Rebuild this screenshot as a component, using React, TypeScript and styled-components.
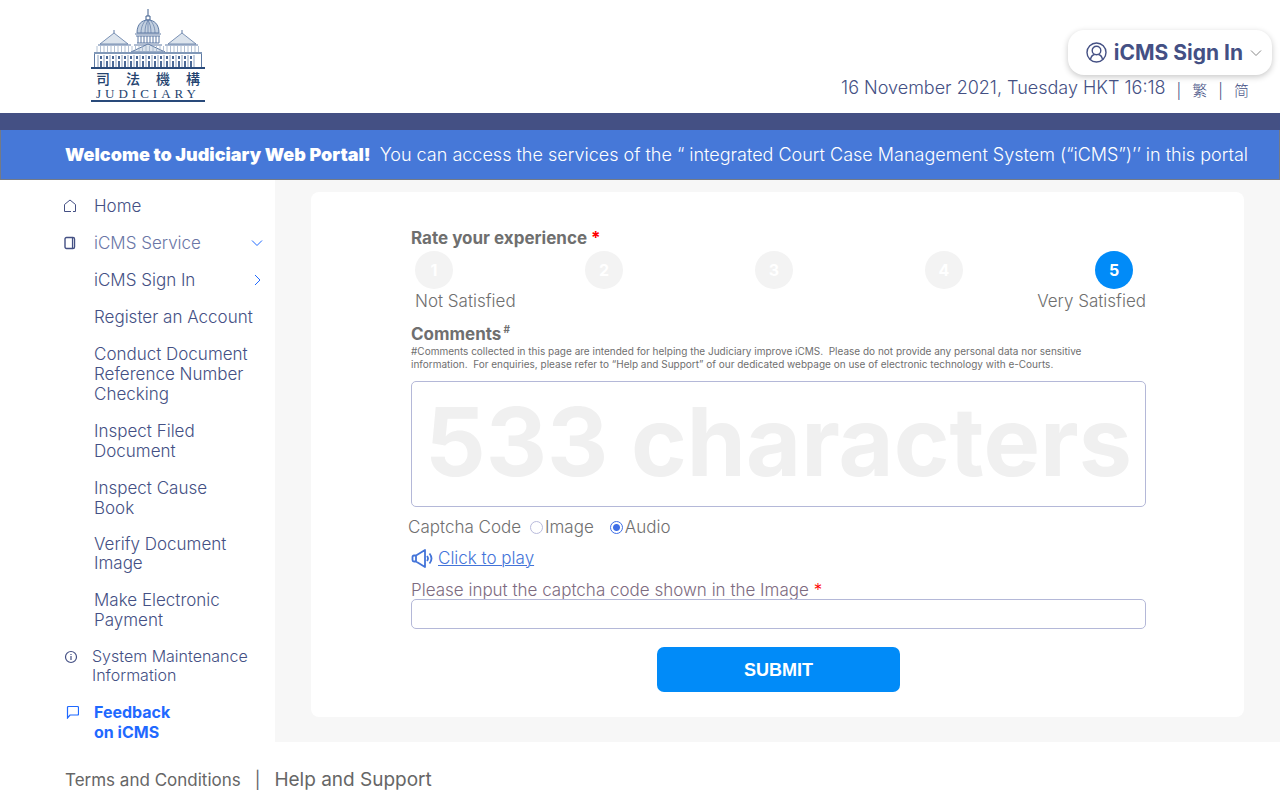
import React from "react";
import styled, { createGlobalStyle } from "styled-components";

const ink = "#445084";
const link = "#4374d9";
const grey = "#6f6f6f";
const bright = "#018bf8";

const GlobalStyle = createGlobalStyle`
  * { box-sizing: border-box; }
  body {
    margin: 0;
    background: #fff;
    color: ${ink};
    font-family: Inter, "Open Sans", "Noto Sans CJK TC", sans-serif;
    font-size: 17px;
    line-height: 20px;
  }
  a { color: inherit; text-decoration: none; }
`;

const Header = styled.header`
  display: flex;
  justify-content: space-between;
  min-height: 113px;
  padding: 8px 8px 8px 90px;
`;

const HeaderSide = styled.div`
  display: flex;
  flex-direction: column;
  align-items: flex-end;
  padding-top: 22px;
`;

const SignInButton = styled.button`
  display: flex;
  align-items: center;
  gap: 7px;
  height: 45px;
  padding: 0 10px 0 18px;
  border: 0;
  border-radius: 16px;
  background: #fff;
  box-shadow: 0 2px 6px rgba(0, 0, 0, 0.22);
  color: ${ink};
  font: 700 21px/24px Inter, sans-serif;
`;

const StatusLine = styled.div`
  display: flex;
  align-items: flex-start;
  gap: 11px;
  padding: 3px 23px 0 0;
`;

const Clock = styled.time`
  font-size: 18px;
  font-weight: 300;
`;

const Languages = styled.nav`
  display: flex;
  gap: 11px;
  padding-top: 3px;
  font-size: 15px;
  font-weight: 300;
`;

const Stripe = styled.div`
  height: 17px;
  background: ${ink};
`;

const Banner = styled.div`
  display: flex;
  align-items: center;
  gap: 9px;
  min-height: 50px;
  padding: 0 23px 0 64px;
  border: solid #747a86;
  border-width: 0 1px 1px;
  background: #4678d8;
  color: #fff;
  font-size: 18px;
  font-weight: 300;
  white-space: nowrap;

  strong { font-weight: 900; }
`;

const Body = styled.div`
  display: grid;
  grid-template-columns: 275px minmax(0, 1fr);
`;

const Sidebar = styled.nav`
  padding: 16px 10px 0 64px;
`;

const NavList = styled.ul`
  display: flex;
  flex-direction: column;
  gap: 17px;
  margin: 0;
  padding: 0;
  list-style: none;
`;

const NavLink = styled.a<{ $active?: boolean; $small?: boolean; $tight?: boolean; $muted?: boolean }>`
  display: grid;
  grid-template-columns: 14px 1fr 14px;
  column-gap: ${(p) => (p.$small ? 14 : 16)}px;
  font-size: ${(p) => (p.$small || p.$active ? 16 : 17)}px;
  line-height: ${(p) => (p.$small || p.$tight ? 19 : 20)}px;
  font-weight: ${(p) => (p.$active ? 700 : 300)};
  color: ${(p) => (p.$active ? "#1f69ff" : p.$muted ? "#6a76a6" : ink)};
  white-space: nowrap;

  svg { margin-top: 3px; }
`;

const Content = styled.main`
  padding: 12px 36px 25px;
  background: #f7f7f7;
`;

const Card = styled.form`
  display: flex;
  flex-direction: column;
  padding: 36px 98px 25px 100px;
  border-radius: 8px;
  background: #fff;
  color: ${grey};
  font-weight: 300;
`;

const Rating = styled.fieldset`
  margin: 0 0 13px;
  padding: 0;
  border: 0;
`;

const Legend = styled.legend`
  padding: 0;
  margin-bottom: 3px;
  font-weight: 700;
`;

const Required = styled.span`
  color: #f00;
`;

const Scale = styled.div`
  display: flex;
  justify-content: space-between;
  padding: 0 13px 0 4px;
`;

const Score = styled.label`
  position: relative;
  display: grid;
  place-items: center;
  width: 38px;
  height: 38px;
  border-radius: 50%;
  background: #f3f3f3;
  color: #fff;
  font-size: 16px;
  font-weight: 700;

  input {
    position: absolute;
    inset: 0;
    margin: 0;
    opacity: 0;
  }

  &:has(input:checked) { background: ${bright}; }
`;

const ScaleEnds = styled.div`
  display: flex;
  justify-content: space-between;
  padding: 2px 0 0 4px;
`;

const FieldTitle = styled.label`
  font-weight: 700;

  sup {
    margin-left: 2px;
    font-size: 10px;
    line-height: 10px;
  }
`;

const Note = styled.p`
  margin: 1px 0 10px;
  font-size: 10px;
  line-height: 13px;
  font-weight: 400;
  white-space: pre-line;
`;

const CommentBox = styled.div`
  position: relative;
  height: 126px;
`;

const CommentInput = styled.textarea`
  display: block;
  width: 100%;
  height: 100%;
  padding: 8px;
  border: 1px solid #b4b8d8;
  border-radius: 5px;
  background: transparent;
  resize: none;
`;

const Remaining = styled.output`
  position: absolute;
  inset: 0 0 4px;
  display: grid;
  place-items: center;
  color: #f0f0f0;
  font-size: 95px;
  font-weight: 700;
  line-height: 120px;
  white-space: nowrap;
  pointer-events: none;
`;

const CaptchaMode = styled.div`
  display: flex;
  align-items: center;
  gap: 9px;
  margin: 10px 0 11px -3px;
`;

const Choice = styled.label`
  display: flex;
  align-items: center;
  gap: 2px;
  margin-right: 7px;
`;

const Radio = styled.input`
  appearance: none;
  width: 13px;
  height: 13px;
  margin: 0;
  border: 1px solid #b9bbdc;
  border-radius: 50%;

  &:checked {
    border-color: #3f6fe6;
    background: radial-gradient(circle, #3f6fe6 3px, #fff 4px);
  }
`;

const PlayLink = styled.a`
  display: flex;
  align-items: center;
  align-self: flex-start;
  gap: 5px;
  margin-bottom: 13px;
  color: ${link};

  span {
    text-decoration: underline;
    text-decoration-thickness: 1px;
  }
`;

const CaptchaLabel = styled.label`
  line-height: 18px;
  color: #7d6b80;
`;

const CaptchaInput = styled.input`
  width: 100%;
  height: 30px;
  padding: 0 8px;
  border: 1px solid #b4b8d8;
  border-radius: 5px;
`;

const Submit = styled.button`
  align-self: center;
  width: 243px;
  height: 45px;
  margin-top: 18px;
  border: 0;
  border-radius: 7px;
  background: ${bright};
  color: #fff;
  font: 700 18px/24px "Liberation Sans", sans-serif;
`;

const Footer = styled.footer`
  display: flex;
  align-items: center;
  gap: 14px;
  min-height: 58px;
  padding: 18px 65px 0;
  color: #666;
`;

const SupportLink = styled.a`
  font-size: 19px;
`;

const range = (n: number) => Array.from({ length: n }, (_, i) => i);

function CourtLogo() {
  return (
    <svg width="116" height="96" viewBox="0 0 116 96" role="img" aria-label="Judiciary">
      <g fill="none" stroke="#5d79a3" strokeWidth="1">
        <path d="M58 1v7M56 8h4v4h-4z" stroke="#3d5c8c" />
        <path d="M47 25c0-9 5-13 11-13s11 4 11 13z" fill="#c3d0e0" />
        <path d="M51 25c0-7 3-11 5-13M65 25c0-7-3-11-5-13M58 12v13M55 25c0-6 1-9 3-13M61 25c0-6-1-9-3-13" strokeWidth=".7" />
        <path d="M45 26h26M46 28h24M47 35h22M44 37h28" />
        {range(8).map((i) => <path key={i} d={`M${48 + i * 3} 28v7`} />)}
        <path d="M10 36 24 25l14 11zM78 36 92 25l14 11z" fill="#dce4ed" strokeWidth=".8" />
        <path d="M24 22v3M92 22v3" />
        <path d="M8 37h33M75 37h33M41 44l17-8 17 8z" fill="#dce4ed" />
        <path d="M4 45h108" stroke="#8098b8" strokeWidth="2" />
        {range(30).map((i) => <path key={i} d={`M${7 + i * 3.5} 38v6`} stroke="#9fb1c9" strokeWidth=".8" />)}
        {range(17).map((i) => (
          <path key={i} d={`M${8 + i * 6} 59V47`} stroke="#8ba0bf" strokeWidth="1" />
        ))}
        {range(16).map((i) => (
          <path key={i} d={`M${11 + i * 6} 48v3M${11 + i * 6} 53v6`} stroke="#4a6896" strokeWidth="2" />
        ))}
        <path d="M4.500 46v13M111.500 46v13" />
      </g>
      <path d="M1 60h114M1 93h114" stroke="#294a7a" strokeWidth="2" />
      <g fill="#24436f">
        <text x="6" y="76" fontFamily="Noto Sans CJK TC" fontSize="14" fontWeight="500" letterSpacing="16">
          司法機<tspan letterSpacing="0">構</tspan>
        </text>
        <text x="6" y="90" fontFamily="Liberation Serif" fontSize="13" letterSpacing="4">JUDICIARY</text>
      </g>
    </svg>
  );
}

function Chevron({ size, height, color, right }: { size: number; height: number; color: string; right?: boolean }) {
  return (
    <svg width={size} height={height} viewBox="0 0 12 12" fill="none" stroke={color} strokeWidth="1" aria-hidden="true">
      <path d={right ? "M4 1l5 5-5 5" : "M1 3.500l5 5 5-5"} />
    </svg>
  );
}

const UserIcon = () => (
  <svg width="21" height="21" viewBox="0 0 21 21" fill="none" stroke={ink} strokeWidth="1.400" aria-hidden="true">
    <circle cx="10.500" cy="10.500" r="9.500" />
    <circle cx="10.500" cy="8.500" r="4.300" />
    <path d="M4.500 17.500c.5-3 2-4.500 4-5M16.500 17.500c-.5-3-2-4.500-4-5" />
  </svg>
);

const HomeIcon = () => (
  <svg width="12" height="14" viewBox="0 0 12 14" fill="none" stroke={ink} strokeWidth="1" aria-hidden="true">
    <path d="M9 12.500h2.500V5.500L6 1 .5 5.500v7H7" />
  </svg>
);

const ServiceIcon = () => (
  <svg width="12" height="14" viewBox="0 0 12 14" fill="none" stroke={ink} aria-hidden="true">
    <rect x="1" y="1.500" width="9.500" height="11" rx="1.500" strokeWidth="1.400" />
    <path d="M8.500 2v10" strokeWidth="1.200" />
  </svg>
);

const InfoIcon = () => (
  <svg width="14" height="14" viewBox="0 0 14 14" fill="none" stroke={ink} aria-hidden="true">
    <circle cx="7" cy="7" r="5.500" strokeWidth="1.200" />
    <path d="M7 6v4M7 4v1" strokeWidth="1.200" />
  </svg>
);

const FeedbackIcon = () => (
  <svg width="15" height="14" viewBox="0 0 15 14" fill="none" stroke="#1f69ff" strokeWidth="1.200" aria-hidden="true">
    <path d="M3.500 13V2.500q0-1 1-1h9q1 0 1 1v6.500q0 1-1 1H6z" />
  </svg>
);

const SpeakerIcon = () => (
  <svg width="22" height="20" viewBox="0 0 22 20" fill="none" stroke={link} strokeWidth="1.800" strokeLinejoin="round" aria-hidden="true">
    <path d="M5 7.500H3Q1.500 7.500 1.500 9v3q0 1.500 1.500 1.500h2L14 19V2zM5 7.500v6M16 8q2 2.500 0 5M18.500 5.500q4 5 0 10" />
  </svg>
);

type Item = {
  label: React.ReactNode;
  icon?: React.ReactNode;
  mark?: "down" | "right";
  active?: boolean;
  small?: boolean;
  tight?: boolean;
  muted?: boolean;
};

const items: Item[] = [
  { label: "Home", icon: <HomeIcon /> },
  { label: "iCMS Service", icon: <ServiceIcon />, mark: "down", muted: true },
  { label: "iCMS Sign In", mark: "right" },
  { label: "Register an Account" },
  { label: <>Conduct Document<br />Reference Number<br />Checking</> },
  { label: <>Inspect Filed<br />Document</> },
  { label: <>Inspect Cause<br />Book</> },
  { label: <>Verify Document<br />Image</>, tight: true },
  { label: <>Make Electronic<br />Payment</> },
  { label: <>System Maintenance<br />Information</>, icon: <InfoIcon />, small: true },
  { label: <>Feedback<br />on iCMS</>, icon: <FeedbackIcon />, active: true },
];

export default function App() {
  return (
    <>
      <GlobalStyle />
      <Header>
        <CourtLogo />
        <HeaderSide>
          <SignInButton type="button">
            <UserIcon />
            iCMS Sign In
            <Chevron size={12} height={12} color="#888" />
          </SignInButton>
          <StatusLine>
            <Clock>16 November 2021, Tuesday HKT 16:18</Clock>
            <Languages aria-label="Language">
              <span>|</span>
              <a href="#tc" lang="zh-Hant">繁</a>
              <span>|</span>
              <a href="#sc" lang="zh-Hans">简</a>
            </Languages>
          </StatusLine>
        </HeaderSide>
      </Header>
      <Stripe />
      <Banner>
        <strong>Welcome to Judiciary Web Portal!</strong>
        <span>You can access the services of the “ integrated Court Case Management System (“iCMS”)’’ in this portal</span>
      </Banner>
      <Body>
        <Sidebar>
          <NavList>
            {items.map((item, i) => (
              <li key={i}>
                <NavLink href="#" $active={item.active} $small={item.small} $tight={item.tight} $muted={item.muted}>
                  {item.icon ?? <span />}
                  <span>{item.label}</span>
                  {item.mark && <Chevron size={12} height={14} color="#1f69ff" right={item.mark === "right"} />}
                </NavLink>
              </li>
            ))}
          </NavList>
        </Sidebar>
        <Content>
          <Card>
            <Rating>
              <Legend>Rate your experience <Required>*</Required></Legend>
              <Scale>
                {range(5).map((i) => (
                  <Score key={i}>
                    <input type="radio" name="score" value={i + 1} defaultChecked={i === 4} />
                    {i + 1}
                  </Score>
                ))}
              </Scale>
              <ScaleEnds>
                <span>Not Satisfied</span>
                <span>Very Satisfied</span>
              </ScaleEnds>
            </Rating>
            <FieldTitle htmlFor="comments">Comments<sup>#</sup></FieldTitle>
            <Note>
              {"#Comments collected in this page are intended for helping the Judiciary improve iCMS.\u00a0 Please do not provide any personal data nor sensitive\ninformation.\u00a0 For enquiries, please refer to “Help and Support” of our dedicated webpage on use of electronic technology with e-Courts."}
            </Note>
            <CommentBox>
              <Remaining htmlFor="comments">533 characters</Remaining>
              <CommentInput id="comments" />
            </CommentBox>
            <CaptchaMode role="radiogroup" aria-label="Captcha Code">
              <span>Captcha Code</span>
              <Choice><Radio type="radio" name="captcha" />Image</Choice>
              <Choice><Radio type="radio" name="captcha" defaultChecked />Audio</Choice>
            </CaptchaMode>
            <PlayLink href="#play"><SpeakerIcon /><span>Click to play</span></PlayLink>
            <CaptchaLabel htmlFor="code">Please input the captcha code shown in the Image <Required>*</Required></CaptchaLabel>
            <CaptchaInput id="code" type="text" />
            <Submit type="button">SUBMIT</Submit>
          </Card>
        </Content>
      </Body>
      <Footer>
        <a href="#terms">Terms and Conditions</a>
        <span>|</span>
        <SupportLink href="#support">Help and Support</SupportLink>
      </Footer>
    </>
  );
}
